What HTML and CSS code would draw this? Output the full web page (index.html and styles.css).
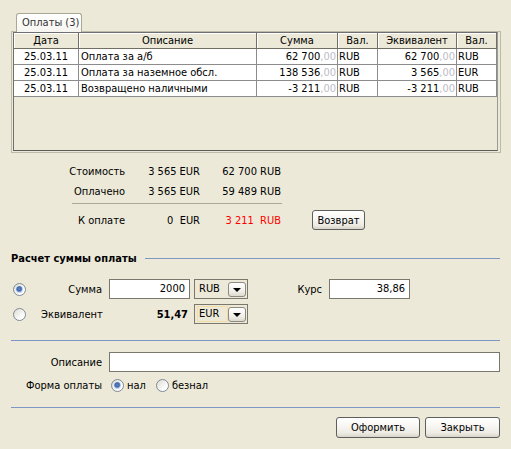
FILE: index.html
```html
<!DOCTYPE html>
<html lang="ru">
<head>
<meta charset="utf-8">
<title>Оплаты</title>
<link rel="stylesheet" href="styles.css">
</head>
<body>
<div class="dlg">
  <div class="tabs"><div class="tab">Оплаты (3)</div></div>
  <div class="tabpanel">
    <div class="gridbox">
      <table class="grid">
        <colgroup>
          <col class="w-date"><col class="w-desc"><col class="w-sum"><col class="w-cur"><col class="w-eq"><col class="w-cur">
        </colgroup>
        <thead>
          <tr><th>Дата</th><th>Описание</th><th>Сумма</th><th>Вал.</th><th>Эквивалент</th><th>Вал.</th></tr>
        </thead>
        <tbody>
          <tr><td class="date">25.03.11</td><td class="txt">Оплата за а/б</td><td class="num">62 700<span class="dec">,00</span></td><td class="cur">RUB</td><td class="num">62 700<span class="dec">,00</span></td><td class="cur">RUB</td></tr>
          <tr><td class="date">25.03.11</td><td class="txt">Оплата за наземное обсл.</td><td class="num">138 536<span class="dec">,00</span></td><td class="cur">RUB</td><td class="num">3 565<span class="dec">,00</span></td><td class="cur">EUR</td></tr>
          <tr><td class="date">25.03.11</td><td class="txt">Возвращено наличными</td><td class="num">-3 211<span class="dec">,00</span></td><td class="cur">RUB</td><td class="num">-3 211<span class="dec">,00</span></td><td class="cur">RUB</td></tr>
        </tbody>
      </table>
    </div>
  </div>

  <div class="summary">
    <span class="s-lbl">Стоимость</span><span class="s-val">3 565 EUR</span><span class="s-val">62 700 RUB</span><span></span>
    <span class="s-lbl">Оплачено</span><span class="s-val">3 565 EUR</span><span class="s-val">59 489 RUB</span><span></span>
    <div class="s-line"></div><span></span>
    <span class="s-lbl">К оплате</span><span class="s-val">0&nbsp; EUR</span><span class="s-val red">3 211&nbsp; RUB</span><button class="btn btn-ret">Возврат</button>
  </div>

  <div class="section"><span class="section-title">Расчет суммы оплаты</span><span class="section-line"></span></div>

  <div class="calc">
    <div class="crow">
      <div class="rcell"><span class="radio on"></span></div>
      <span class="c-lbl">Сумма</span>
      <div class="field f-sum">2000</div>
      <div class="combo"><span class="combo-text">RUB</span><span class="combo-btn"><span class="tri"></span></span></div>
      <span class="c-lbl k-lbl">Курс</span>
      <div class="field f-sum">38,86</div>
    </div>
    <div class="crow">
      <div class="rcell"><span class="radio"></span></div>
      <span class="c-lbl">Эквивалент</span>
      <div class="c-val">51,47</div>
      <div class="combo"><span class="combo-text focus">EUR</span><span class="combo-btn"><span class="tri"></span></span></div>
    </div>
  </div>

  <div class="sep sep1"></div>

  <div class="details">
    <div class="drow">
      <span class="d-lbl">Описание</span>
      <div class="field f-desc"></div>
    </div>
    <div class="drow drow2">
      <span class="d-lbl">Форма оплаты</span>
      <span class="radio on r-nal"></span><span class="r-text">нал</span>
      <span class="radio r-beznal"></span><span class="r-text">безнал</span>
    </div>
  </div>

  <div class="sep sep2"></div>

  <div class="actions">
    <button class="btn btn-ok">Оформить</button>
    <button class="btn btn-close">Закрыть</button>
  </div>
</div>
</body>
</html>
```

FILE: styles.css
```css
html, body {
  margin: 0;
  padding: 0;
  background: #ECE9D8;
}
body {
  font-family: "DejaVu Sans Condensed", "Liberation Sans", sans-serif;
  font-size: 11px;
  color: #000;
  width: 511px;
  height: 449px;
  overflow: hidden;
}
.dlg {
  padding: 13px 10px 0 11px;
  display: flex;
  flex-direction: column;
}

/* tabs */
.tabs {
  display: flex;
  height: 18px;
  padding-left: 5px;
}
.tab {
  width: 66px;
  box-sizing: border-box;
  height: 19px;
  border: 1px solid #A9A796;
  border-bottom: none;
  border-radius: 3px 3px 0 0;
  background: linear-gradient(#FFFFFF, #F6F5F0);
  padding-left: 5px;
  line-height: 17px;
  color: #333;
  position: relative;
  z-index: 1;
}
.tabpanel {
  height: 122px;
  box-sizing: border-box;
  border: 1px solid #BDBAA8;
  padding: 0 2px 1px 1px;
  display: flex;
}
.gridbox {
  flex: 1;
  border: 1px solid #6F6F6F;
  border-right-color: #9A9A9A;
  border-bottom-color: #5A5A5A;
  background: #ECE9D8;
}

/* grid */
.grid {
  table-layout: fixed;
  border-collapse: separate;
  border-spacing: 0;
  width: 483px;
}
.w-date { width: 65px; }
.w-desc { width: 178px; }
.w-sum { width: 81px; }
.w-cur { width: 40px; }
.w-eq { width: 79px; }
.grid th, .grid td {
  height: 15px;
  line-height: 15px;
  padding: 0;
  white-space: nowrap;
  overflow: hidden;
  font-weight: normal;
}
.grid th {
  background: #ECE9D8;
  border-right: 1px solid #716F64;
  border-bottom: 1px solid #716F64;
  box-shadow: inset 1px 1px 0 #FFFFFF;
  text-align: center;
}
.grid td {
  background: #FFFFFF;
  border-right: 1px solid #8C8C8C;
  border-bottom: 1px solid #8C8C8C;
}
.grid td.date { text-align: center; }
.grid td.txt { padding-left: 2px; }
.grid td.num { text-align: right; padding-right: 1px; }
.grid td.cur { padding-left: 1px; }
.dec { color: #BDBDC6; }

/* summary */
.summary {
  margin-top: 8px;
  margin-left: 48px;
  display: grid;
  grid-template-columns: 66px 75px 81px auto;
  grid-template-rows: 20px 20px 9px 20px;
  align-items: center;
}
.s-lbl { text-align: right; }
.s-val { text-align: right; white-space: pre; }
.red { color: #FF0000; }
.s-line {
  grid-column: 1 / 4;
  margin-left: 13px;
  margin-right: -1px;
  height: 1px;
  background: #ACA899;
  align-self: start;
  margin-top: 2px;
}
.btn {
  font: inherit;
  color: #000;
  box-sizing: border-box;
  border: 1px solid #5E5E5E;
  border-radius: 3px;
  background: linear-gradient(#FFFFFF 0%, #F7F6F2 45%, #ECEAE2 80%, #D8D4C8 100%);
  padding: 0;
  margin: 0;
}
.btn-ret {
  width: 53px;
  height: 20px;
  margin-left: 31px;
  justify-self: start;
}

/* section */
.section {
  margin-top: 20px;
  height: 16px;
  display: flex;
  align-items: center;
}
.section-title {
  font-weight: bold;
  white-space: nowrap;
}
.section-line {
  flex: 1;
  height: 1px;
  background: #7D97C2;
  margin-left: 8px;
  margin-right: 1px;
}

/* calc */
.calc {
  margin-top: 13px;
  display: flex;
  flex-direction: column;
  gap: 5px;
}
.crow {
  display: flex;
  align-items: center;
  height: 20px;
}
.rcell {
  width: 30px;
  display: flex;
  align-items: center;
}
.rcell .radio { margin-left: 2px; }
.c-lbl {
  width: 61px;
  text-align: right;
}
.k-lbl { width: 74px; }
.field {
  box-sizing: border-box;
  height: 20px;
  background: #FFFFFF;
  border: 1px solid #7A786C;
  line-height: 18px;
  text-align: right;
  padding-right: 4px;
}
.f-sum {
  width: 81px;
  margin-left: 7px;
}
.c-val {
  width: 81px;
  margin-left: 7px;
  box-sizing: border-box;
  text-align: right;
  padding-right: 2px;
  font-weight: bold;
}
.combo {
  box-sizing: border-box;
  width: 54px;
  height: 20px;
  margin-left: 4px;
  border: 1px solid #7A786C;
  display: flex;
  align-items: center;
  padding: 0 1px 0 2px;
}
.combo-text {
  flex: 1;
  box-sizing: border-box;
  height: 16px;
  line-height: 14px;
  padding-left: 1px;
  border: 1px solid transparent;
}
.combo-text.focus { border-color: #F3DDA2; }
.combo-btn {
  box-sizing: border-box;
  width: 18px;
  height: 15px;
  border: 1px solid #8C8A80;
  border-radius: 3px;
  background: linear-gradient(#FFFFFF, #F1F0EA 60%, #DDDACF);
  display: flex;
  align-items: center;
  justify-content: center;
}
.tri {
  width: 0;
  height: 0;
  border-left: 4px solid transparent;
  border-right: 4px solid transparent;
  border-top: 4px solid #000;
  margin-top: 1px;
}

/* radio */
.radio {
  box-sizing: border-box;
  width: 13px;
  height: 13px;
  border-radius: 50%;
  border: 1px solid #7F8A96;
  background: linear-gradient(135deg, #DCDBD3, #FFFFFF 75%);
  position: relative;
  display: inline-block;
  flex: none;
}
.radio.on::after {
  content: "";
  position: absolute;
  left: 2px;
  top: 2px;
  width: 7px;
  height: 7px;
  border-radius: 50%;
  background: radial-gradient(circle at 45% 40%, #5D86C6 0, #3F68AC 2px, #7E9DD0 3px, #C8D6EE 3.5px);
}

/* separators */
.sep {
  height: 1px;
  background: #7D97C2;
  margin-right: 1px;
}
.sep1 { margin-top: 16px; }
.sep2 { margin-top: 13px; }

/* details */
.details {
  margin-top: 11px;
  display: flex;
  flex-direction: column;
  gap: 4px;
}
.drow {
  display: flex;
  align-items: center;
  height: 20px;
}
.drow2 { height: 18px; }
.d-lbl {
  width: 91px;
  text-align: right;
  flex: none;
}
.f-desc {
  flex: 1;
  margin-left: 7px;
  margin-right: 1px;
}
.r-nal { margin-left: 9px; }
.r-beznal { margin-left: 10px; }
.r-text { margin-left: 3px; }

/* actions */
.actions {
  margin-top: 9px;
  display: flex;
  justify-content: flex-end;
  gap: 5px;
  padding-right: 1px;
}
.btn-ok { width: 84px; height: 21px; }
.btn-close { width: 75px; height: 21px; }
```
